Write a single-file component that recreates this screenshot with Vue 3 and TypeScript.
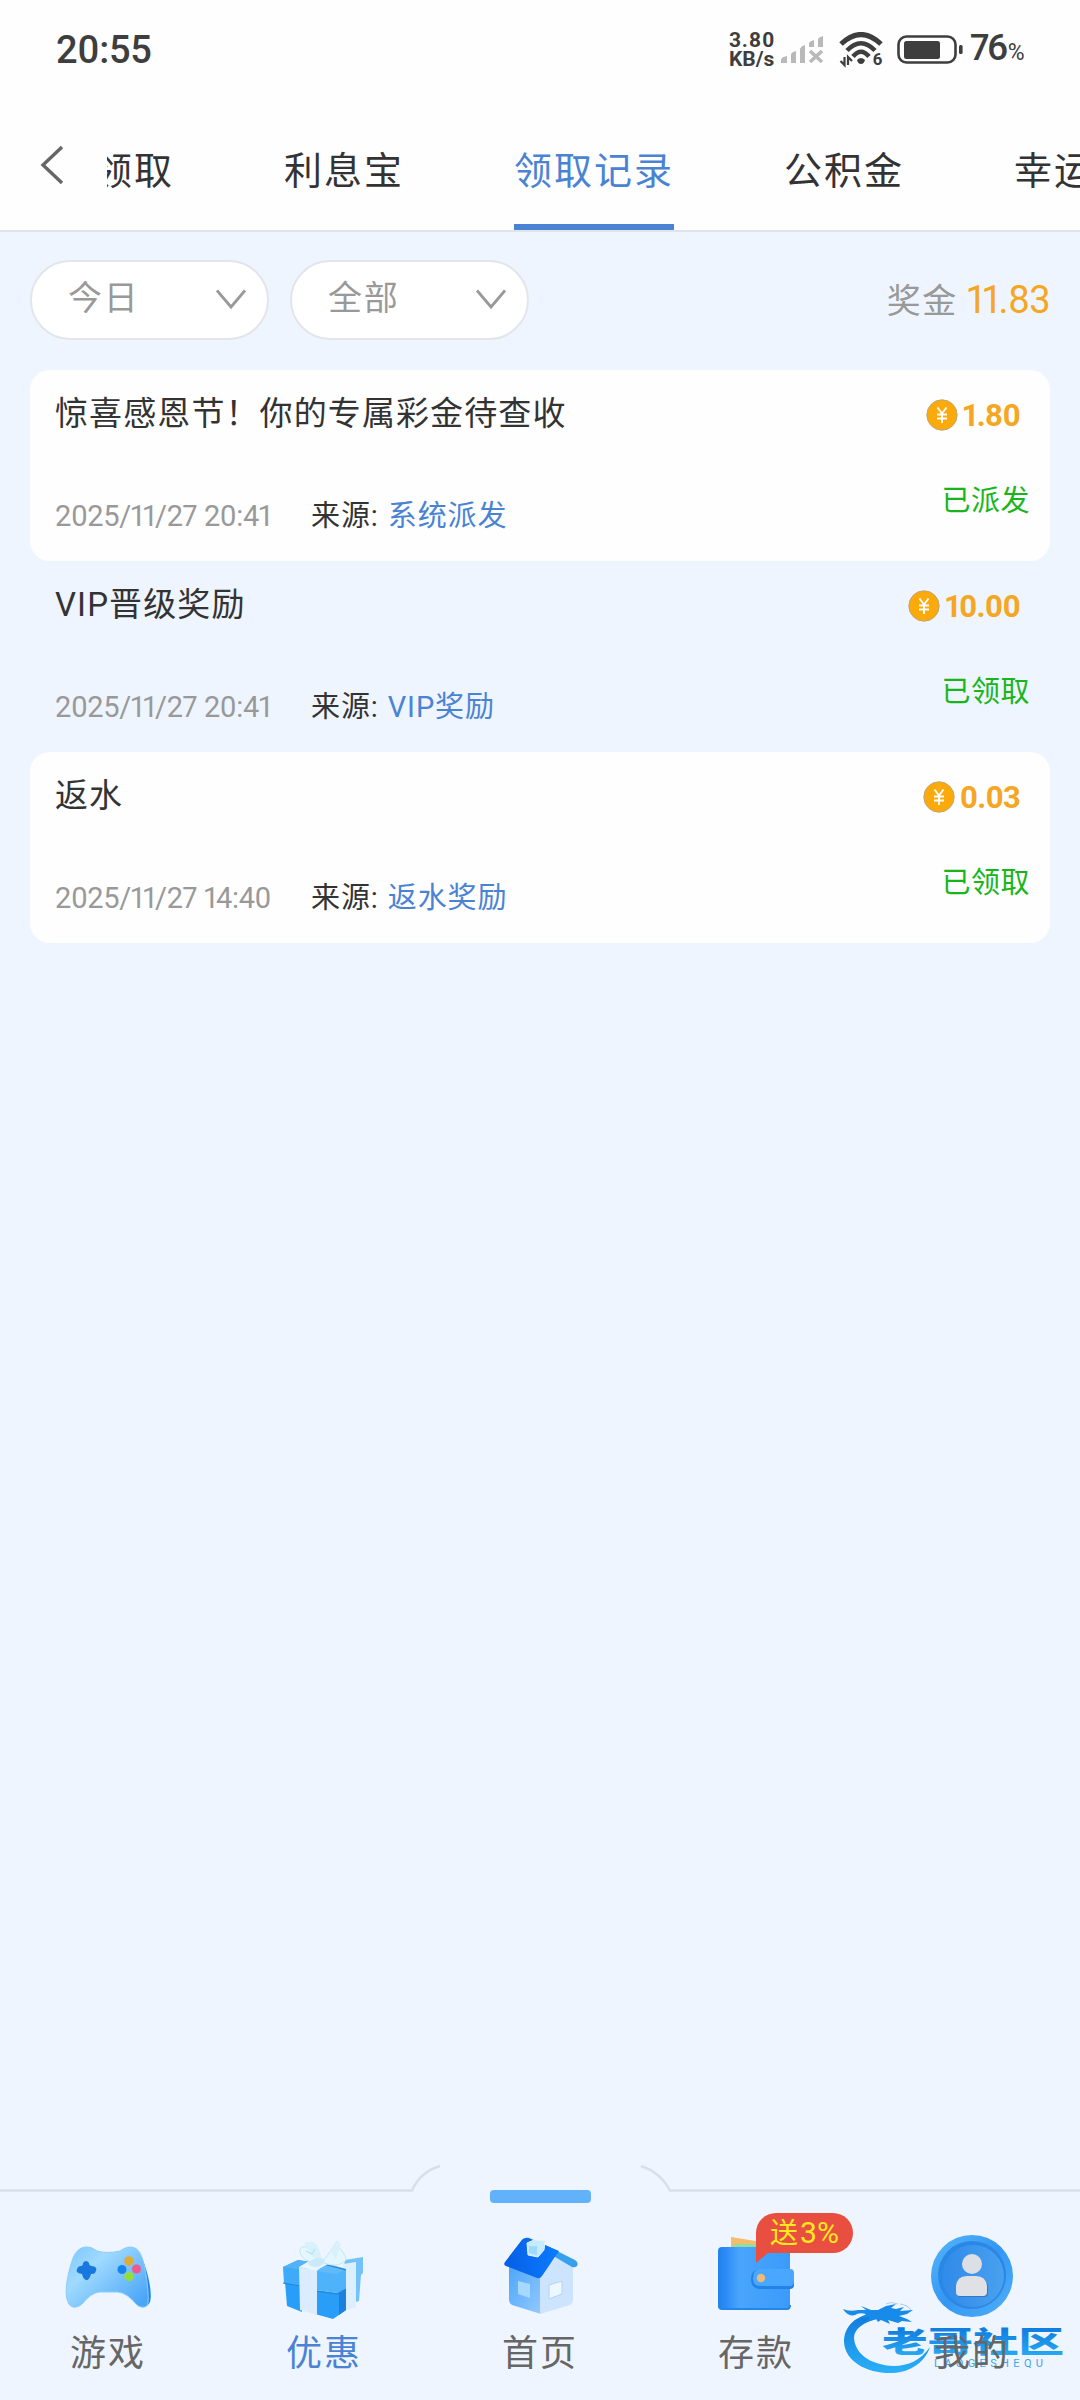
<script setup lang="ts">
import { ref } from 'vue'

interface RewardRecord {
  title: string
  time: string
  source: string
  amount: string
  status: string
}

interface NavItem {
  key: string
  label: string
  badge?: { text: string; rate: string }
}

const tabs = ['领取', '利息宝', '领取记录', '公积金', '幸运']
const activeTab = ref('领取记录')

const filters = ref(['今日', '全部'])
const total = '11.83'

const records: RewardRecord[] = [
  { title: '惊喜感恩节！你的专属彩金待查收', time: '2025/11/27 20:41', source: '系统派发', amount: '1.80', status: '已派发' },
  { title: 'VIP晋级奖励', time: '2025/11/27 20:41', source: 'VIP奖励', amount: '10.00', status: '已领取' },
  { title: '返水', time: '2025/11/27 14:40', source: '返水奖励', amount: '0.03', status: '已领取' },
]

const navItems: NavItem[] = [
  { key: 'game', label: '游戏' },
  { key: 'promo', label: '优惠' },
  { key: 'home', label: '首页' },
  { key: 'deposit', label: '存款', badge: { text: '送', rate: '3%' } },
  { key: 'mine', label: '我的' },
]
const activeNav = ref('promo')
</script>

<template>
  <div class="page">
    <!-- 状态栏 -->
    <div class="status-bar">
      <span class="clock">20:55</span>
      <div class="status-right">
        <div class="speed">
          <span>3.80</span>
          <span>KB/s</span>
        </div>
        <svg class="signal" width="43" height="28" viewBox="0 0 43 28" fill="#b9b9b9">
          <path d="M0 27v-3q0-3 6-4v7zM10 27V18q1-2 5-3v12zM19 27V13q1-3 5-4v18zM28 11V7q1-2 5-3v7zM37 11V3q1-2 5-3v11z" />
          <path d="M29 15l12 11M41 15L29 26" stroke="#b9b9b9" stroke-width="3.600" />
        </svg>
        <svg class="wifi" width="46" height="36" viewBox="0 0 46 36" fill="none" stroke="#3e3e3e">
          <path d="M2 12Q22-7 42 12" stroke-width="5" />
          <path d="M8 18.500Q22 4 36 18.500" stroke-width="4.600" />
          <path d="M14 24.500Q22 15 30 24.500" stroke-width="4.600" />
          <path d="M18 28q4-4 8 0q-1 4-4 4t-4-4z" fill="#3e3e3e" stroke="none" />
          <path d="M5.500 25v8l-4-4M9 33v-8l4 4" stroke-width="2.200" />
          <text x="33.500" y="33" fill="#3e3e3e" stroke="none" font-size="17" font-weight="700">6</text>
        </svg>
        <svg class="battery" width="67" height="30" viewBox="0 0 67 30">
          <rect x="1.500" y="1.500" width="57" height="26" rx="8" fill="none" stroke="#3e3e3e" stroke-width="2.600" />
          <rect x="7" y="6" width="36" height="18" rx="2.500" fill="#3e3e3e" />
          <rect x="62" y="10" width="3.600" height="9" rx="1.500" fill="#3e3e3e" />
        </svg>
        <span class="percent">76<small>%</small></span>
      </div>
    </div>

    <!-- 顶部标签 -->
    <div class="tab-bar">
      <svg class="back" width="26" height="40" viewBox="0 0 26 40" fill="none" stroke="#666" stroke-width="3.400">
        <path d="M22 2L3 20l19 18" />
      </svg>
      <div class="tabs">
        <div v-for="tab in tabs" :key="tab" class="tab" :class="{ active: tab === activeTab }" @click="activeTab = tab">
          {{ tab }}
        </div>
      </div>
    </div>

    <!-- 筛选 -->
    <div class="filters">
      <div v-for="item in filters" :key="item" class="select">
        <span>{{ item }}</span>
        <svg width="30" height="22" viewBox="0 0 30 22" fill="none" stroke="#999" stroke-width="2.800">
          <path d="M1 1.500L15 18 29 1.500" />
        </svg>
      </div>
      <div class="total">
        奖金<span>{{ total }}</span>
      </div>
    </div>

    <!-- 记录列表 -->
    <div class="records">
      <div v-for="(record, index) in records" :key="index" class="record">
        <div class="record-left">
          <div class="record-title">{{ record.title }}</div>
          <div class="record-meta">
            <span class="time">{{ record.time }}</span>
            <span class="source">来源:</span>
            <span class="source-name">{{ record.source }}</span>
          </div>
        </div>
        <div class="record-right">
          <div class="amount">
            <svg width="32" height="32" viewBox="0 0 32 32">
              <circle cx="16" cy="16" r="15.200" fill="#fba90b" stroke="#bfa878" stroke-width="1" />
              <path d="M11.500 8.500l4.500 6 4.500-6M16 14.500V24M11 15.500h10M11 19.500h10" fill="none" stroke="#fff" stroke-width="1.900" />
            </svg>
            <span>{{ record.amount }}</span>
          </div>
          <div class="status">{{ record.status }}</div>
        </div>
      </div>
    </div>

    <!-- 底部导航 -->
    <div class="nav">
      <svg class="nav-line" width="1080" height="30" viewBox="0 0 1080 30" fill="none" stroke="#d8dfea" stroke-width="2.400">
        <path d="M0 26.500H412Q420 8 440 2M641 2Q660 8 670 26.500H1080" />
      </svg>
      <div class="nav-handle" />

      <div class="nav-items">
        <div v-for="item in navItems" :key="item.key" class="nav-item" :class="{ active: item.key === activeNav }"
          @click="activeNav = item.key">
          <div class="nav-icon">
            <svg v-if="item.key === 'game'" width="90" height="90" viewBox="0 0 90 90">
              <defs>
                <linearGradient id="pad" x1="0" y1="0" x2="1" y2=".8">
                  <stop offset="0" stop-color="#79c7fb" />
                  <stop offset=".35" stop-color="#a0daff" />
                  <stop offset="1" stop-color="#4ba6f8" />
                </linearGradient>
              </defs>
              <path d="M65 16q11 0 16 16c6 17 8 32 6 39q-3 7-12 4z" fill="#1d86ee" />
              <path d="M22 16q6-1 12 4 10 3 23 0 8-6 15-3c6 3 8 12 10 21q4 22 3 34c-1 6-8 5-12 1q-9-11-18-12H36q-8 1-17 12c-6 5-12 4-14-2C0 62 6 38 10 27q4-10 12-11z" fill="url(#pad)" stroke="#8bcefc" />
              <path d="M20 32q3-4 6 0 0 3 3 3 7 1 3 7-1 1-4 1-2 7-5 6t-4-6q-7-1-5-5 1-3 4-3 2 0 2-3z" fill="#1878df" />
              <circle cx="66" cy="30" r="4.800" fill="#dfab3a" />
              <circle cx="59" cy="38.500" r="4.500" fill="#1684ef" />
              <circle cx="73.500" cy="38" r="4.500" fill="#ee5a8c" />
              <circle cx="66" cy="45.500" r="4.700" fill="#93dc3e" />
            </svg>
            <svg v-else-if="item.key === 'promo'" width="90" height="90" viewBox="0 0 90 90">
              <path d="M66 29l18-3v16l-2 2-2 26-9 3-12-2z" fill="#72c3f9" />
              <path d="M64 33l13-2v45l-11 4z" fill="#dceffe" />
              <path d="M6 51l17 3v27L8 75z" fill="#279efa" />
              <path d="M4 36l15-7 20 3-14 7-2 17L5 52z" fill="#3daafa" />
              <path d="M4 36l15-7 18 3-13 7z" fill="#55b1f8" />
              <path d="M36 59l24 3 7-4v21l-13 9-18-5z" fill="#299ef8" />
              <path d="M60 62l7-4v21l-7 5z" fill="#1c80df" />
              <path d="M37 40l12-7 18 5v20l-8 4-23-3z" fill="#4eb3fb" />
              <path d="M37 40l12-7 18 5-9 5z" fill="#61bbfb" />
              <path d="M37 60l21 3 9-5M4 52l17 3M48 34l19 5" fill="none" stroke="#2584d0" stroke-width="1.200" />
              <path d="M20 36l18 4v44l-17-5z" fill="#dbecff" />
              <path d="M20 36l10-6 15 2-7 8z" fill="#e8f6ff" />
              <path d="M37 27c-4-9-13-15-16-9-1 8 7 14 17 13zM45 29c5-6 8-12 13-19 1 8 9 12 9 19-5 6-14 6-22 3z" fill="#e4f7ff" stroke="#c4e6f3" stroke-width="1" />
              <path d="M25 12q8-4 14 3l4 13-10-2zM51 20l7-10 4 3-5 15z" fill="#d8f2fc" />
              <path d="M27 20l6 3 3-5" fill="none" stroke="#b9dfee" stroke-width="1.200" />
              <path d="M29 32q7-7 17-4-1 7-9 8-6 0-8-4z" fill="#caeafa" />
            </svg>
            <svg v-else-if="item.key === 'home'" width="90" height="90" viewBox="0 0 90 90">
              <defs>
                <linearGradient id="roof" x1="0" y1="0" x2="1" y2="0">
                  <stop offset="0" stop-color="#065ee5" />
                  <stop offset="1" stop-color="#0b7bff" />
                </linearGradient>
                <linearGradient id="wall" x1="0" y1="0" x2="1" y2="1">
                  <stop offset="0" stop-color="#4ba6f8" />
                  <stop offset="1" stop-color="#93c8ff" />
                </linearGradient>
              </defs>
              <path d="M14 33l32 13v37L17 74q-3-2-3-5z" fill="url(#wall)" />
              <path d="M45 45l18-21 15 10v35q0 3-3 5L45 83z" fill="#cde4fe" />
              <path d="M50 14l30 15q4 3 2 6-2 2-5 1L60 26z" fill="#36a0ef" />
              <path d="M26 10q3-4 8-3l30 13-17 25q-2 3-5 2L11 35q-3-1-1-4z" fill="url(#roof)" />
              <path d="M32 12l7-3 11 1-1 9-6 7-10-2z" fill="#c6ebff" stroke="#ddf3ff" stroke-linejoin="round" />
              <path d="M34 15h8v9l-8-2z" fill="#a1d8ff" />
              <path d="M23 50l12 3v14l-12-4z" fill="#a7d9ff" />
              <path d="M54 54l13-4v13l-13 5z" fill="#edf7ff" stroke="#b3d3f3" />
            </svg>
            <svg v-else-if="item.key === 'deposit'" width="90" height="90" viewBox="0 0 90 90">
              <defs>
                <linearGradient id="wallet" x1="0" y1="0" x2="1" y2="0">
                  <stop offset="0" stop-color="#2380ef" />
                  <stop offset=".12" stop-color="#2d8df6" />
                  <stop offset=".3" stop-color="#49a5fc" />
                  <stop offset="1" stop-color="#3a9bfb" />
                </linearGradient>
              </defs>
              <path d="M20 6l31 5v14H20z" fill="#f4bd6d" />
              <path d="M22 13h41v10H22z" fill="#94dda0" />
              <rect x="7" y="16" width="72" height="62" rx="4" fill="url(#wallet)" />
              <path d="M8 75q0 3 3 3h65q3 0 3-4" fill="none" stroke="#2586ea" stroke-width="2" />
              <path d="M48 39h31q4 0 4 5v10q0 4-4 4H48q-8-1-8-10t8-9z" fill="#2382e8" />
              <path d="M49 38h30q4 0 4 4v8q0 5-4 5H49q-7 0-7-8t7-9z" fill="#4aa7ff" />
              <circle cx="50" cy="47" r="4.200" fill="#edba7b" />
            </svg>
            <svg v-else width="90" height="90" viewBox="0 0 90 90">
              <defs>
                <linearGradient id="coin" x1="0" y1="0" x2="1" y2="1">
                  <stop offset="0" stop-color="#56b8fb" />
                  <stop offset=".5" stop-color="#3396f3" />
                  <stop offset="1" stop-color="#51b1f8" />
                </linearGradient>
                <linearGradient id="coin-inner" x1="0" y1="0" x2="1" y2="0">
                  <stop offset="0" stop-color="#2f8aea" />
                  <stop offset="1" stop-color="#49a1ee" />
                </linearGradient>
              </defs>
              <circle cx="45" cy="45" r="41" fill="url(#coin)" />
              <circle cx="45" cy="44" r="34" fill="#2b87e6" />
              <circle cx="46" cy="45" r="31" fill="url(#coin-inner)" />
              <path d="M31 56q1-10 11-10h8q10 0 11 10v6q0 4-4 4H34q-4 0-3-4z" fill="#3478c4" />
              <circle cx="45" cy="33" r="10" fill="#dcdfe5" />
              <path d="M29 55q1-10 11-10h9q10 0 11 10v6q0 4-4 4H33q-4 0-4-4z" fill="#dfe1e6" />
            </svg>
          </div>
          <span class="nav-label">{{ item.label }}</span>
          <div v-if="item.badge" class="badge">{{ item.badge.text }}<span>{{ item.badge.rate }}</span></div>
        </div>
      </div>

      <!-- 社区水印 -->
      <svg class="watermark" width="240" height="80" viewBox="0 0 240 80">
        <defs>
          <linearGradient id="mark" x1="0" y1="0" x2="0" y2="1">
            <stop offset="0" stop-color="#0f79dc" />
            <stop offset="1" stop-color="#2ab0f8" />
          </linearGradient>
        </defs>
        <path d="M38 13C15 14 4 27 4 42c1 20 24 32 49 31 18-1 32-11 37-26-9 13-22 19-36 19C29 65 15 53 14 38c0-9 9-16 26-20z" fill="url(#mark)" />
        <path d="M3 9q6 3 15 1l8 0-5-4 10 4 7 0 8-4 10-2-5 4 5 1 8-2-4 4 13-1-6 4-8 2q7 2 13 6l-10-1-4 2-10-3 2 4-9-4-3 2-2-3-9 3 3-5-9 1 5-4q-7-2-11 1-7 2-12-6z" fill="#168be9" />
        <path d="M46 4q5-3 12 0M60 4q8 1 11 6" fill="none" stroke="#a9cdf3" stroke-width="1" />
        <text x="42" y="53" textLength="182" font-size="29" font-weight="900" fill="url(#mark)" lengthAdjust="spacingAndGlyphs">老哥社区</text>
        <text x="94" y="67" textLength="109" font-size="11" fill="#3aa5ef">LAOGESHEQU</text>
      </svg>
    </div>
  </div>
</template>

<style>
body {
  margin: 0;
  background: #eff5ff;
}
</style>

<style scoped>
.page {
  display: flex;
  flex-direction: column;
  width: 1080px;
  height: 2400px;
  overflow: hidden;
  background: #eff5ff;
  color: #333;
  font-family: Roboto, "Noto Sans CJK SC", sans-serif;
  font-variant-numeric: proportional-nums;
}

.status-bar {
  display: flex;
  justify-content: space-between;
  box-sizing: border-box;
  height: 100px;
  padding: 0 54px 0 56px;
  background: #fefefe;
  color: #3e3e3e;
}

.clock {
  font-size: 38px;
  font-weight: 500;
  line-height: 101px;
  letter-spacing: -0.3px;
}

.status-right {
  display: flex;
  align-items: center;
  height: 100px;
}

.speed {
  display: flex;
  flex-direction: column;
  width: 52px;
  font-size: 21px;
  font-weight: 700;
  line-height: 19px;
}

.speed span:first-child {
  letter-spacing: 0.8px;
}

.signal {
  margin-right: 15px;
}

.wifi {
  margin-right: 12px;
}

.battery {
  margin-right: 6px;
}

.percent {
  width: 56px;
  font-size: 37px;
  font-weight: 500;
  line-height: 50px;
  white-space: nowrap;
  letter-spacing: -2.5px;
}

.percent small {
  margin-left: 2px;
  font-size: 23px;
  font-weight: 400;
}

.tab-bar {
  display: flex;
  box-sizing: border-box;
  height: 132px;
  border-bottom: 2px solid #dfe4ea;
  background: #fefefe;
}

.back {
  flex: none;
  margin: 45px 41px 0 40px;
}

.tabs {
  display: flex;
  flex: 1;
  gap: 110px;
  overflow: hidden;
}

.tab {
  flex: none;
  box-sizing: border-box;
  height: 130px;
  font-size: 38px;
  line-height: 143px;
  letter-spacing: 2px;
  white-space: nowrap;
}

.tab:first-child {
  margin-left: -13px;
}

.tab.active {
  border-bottom: 6px solid #4a83d4;
  color: #4a83d4;
}

.filters {
  display: flex;
  gap: 21px;
  padding: 28px 30px 29px;
}

.select {
  display: flex;
  align-items: center;
  justify-content: space-between;
  box-sizing: border-box;
  width: 239px;
  height: 80px;
  padding: 0 21px 0 36px;
  border: 2px solid #e2e5e9;
  border-radius: 40px;
  background: #fff;
  color: #999;
  font-size: 34px;
  letter-spacing: 1.7px;
}

.select span {
  padding-bottom: 4px;
  line-height: 50px;
}

.total {
  margin-left: auto;
  color: #999;
  font-size: 34px;
  line-height: 80px;
  letter-spacing: 1.7px;
}

.total span {
  margin-left: 9px;
  color: #f5a623;
  font-size: 38px;
  letter-spacing: -0.7px;
}

.records {
  padding: 0 30px;
}

.record {
  display: flex;
  justify-content: space-between;
  box-sizing: border-box;
  height: 191px;
  padding: 0 20px 0 25px;
  border-radius: 20px;
}

.record:nth-child(odd) {
  background: #fefefe;
}

.record-title {
  padding-top: 19px;
  font-size: 33px;
  line-height: 50px;
  letter-spacing: 1.1px;
}

.record-meta {
  display: flex;
  padding-top: 52px;
  font-size: 29px;
  line-height: 50px;
  letter-spacing: 0.9px;
}

.time {
  margin-right: 40px;
  color: #999;
  letter-spacing: -0.4px;
}

.source {
  margin-right: 9px;
}

.source-name {
  color: #4a83d4;
}

.record-right {
  display: flex;
  flex-direction: column;
  align-items: flex-end;
}

.amount {
  display: flex;
  align-items: center;
  gap: 5px;
  height: 50px;
  margin: 20px 10px 36px 0;
  color: #f5a623;
  font-size: 31px;
  font-weight: 700;
  letter-spacing: -0.8px;
}

.status {
  color: #18b61c;
  font-size: 29px;
  line-height: 51px;
  letter-spacing: 0.5px;
}

.nav {
  position: relative;
  height: 236px;
  margin-top: auto;
}

.nav-line {
  display: block;
}

.nav-handle {
  width: 101px;
  height: 13px;
  margin: -4px auto 0;
  border-radius: 4px;
  background: #61b2fb;
}

.nav-items {
  display: grid;
  grid-template-columns: repeat(5, 1fr);
  padding-top: 28px;
}

.nav-item {
  position: relative;
  display: flex;
  flex-direction: column;
  align-items: center;
  color: #666;
}

.nav-icon {
  height: 90px;
}

.nav-label {
  position: relative;
  z-index: 2;
  margin-top: 8px;
  font-size: 36px;
  line-height: 50px;
  letter-spacing: 2px;
}

.nav-item.active .nav-label {
  color: #4a83d4;
}

.badge {
  position: absolute;
  top: -18px;
  left: 108px;
  width: 97px;
  height: 40px;
  border-radius: 20px 20px 20px 0;
  background: #e94f41;
  color: #ffe81f;
  font-size: 28px;
  line-height: 39px;
  text-align: center;
  white-space: nowrap;
}

.badge span {
  margin-left: 2px;
  font-size: 30px;
}

.badge::after {
  content: '';
  position: absolute;
  top: 39px;
  left: 0;
  border-top: 11px solid #e94f41;
  border-right: 13px solid transparent;
}

.watermark {
  position: absolute;
  top: 136px;
  left: 840px;
  z-index: 1;
}
</style>
